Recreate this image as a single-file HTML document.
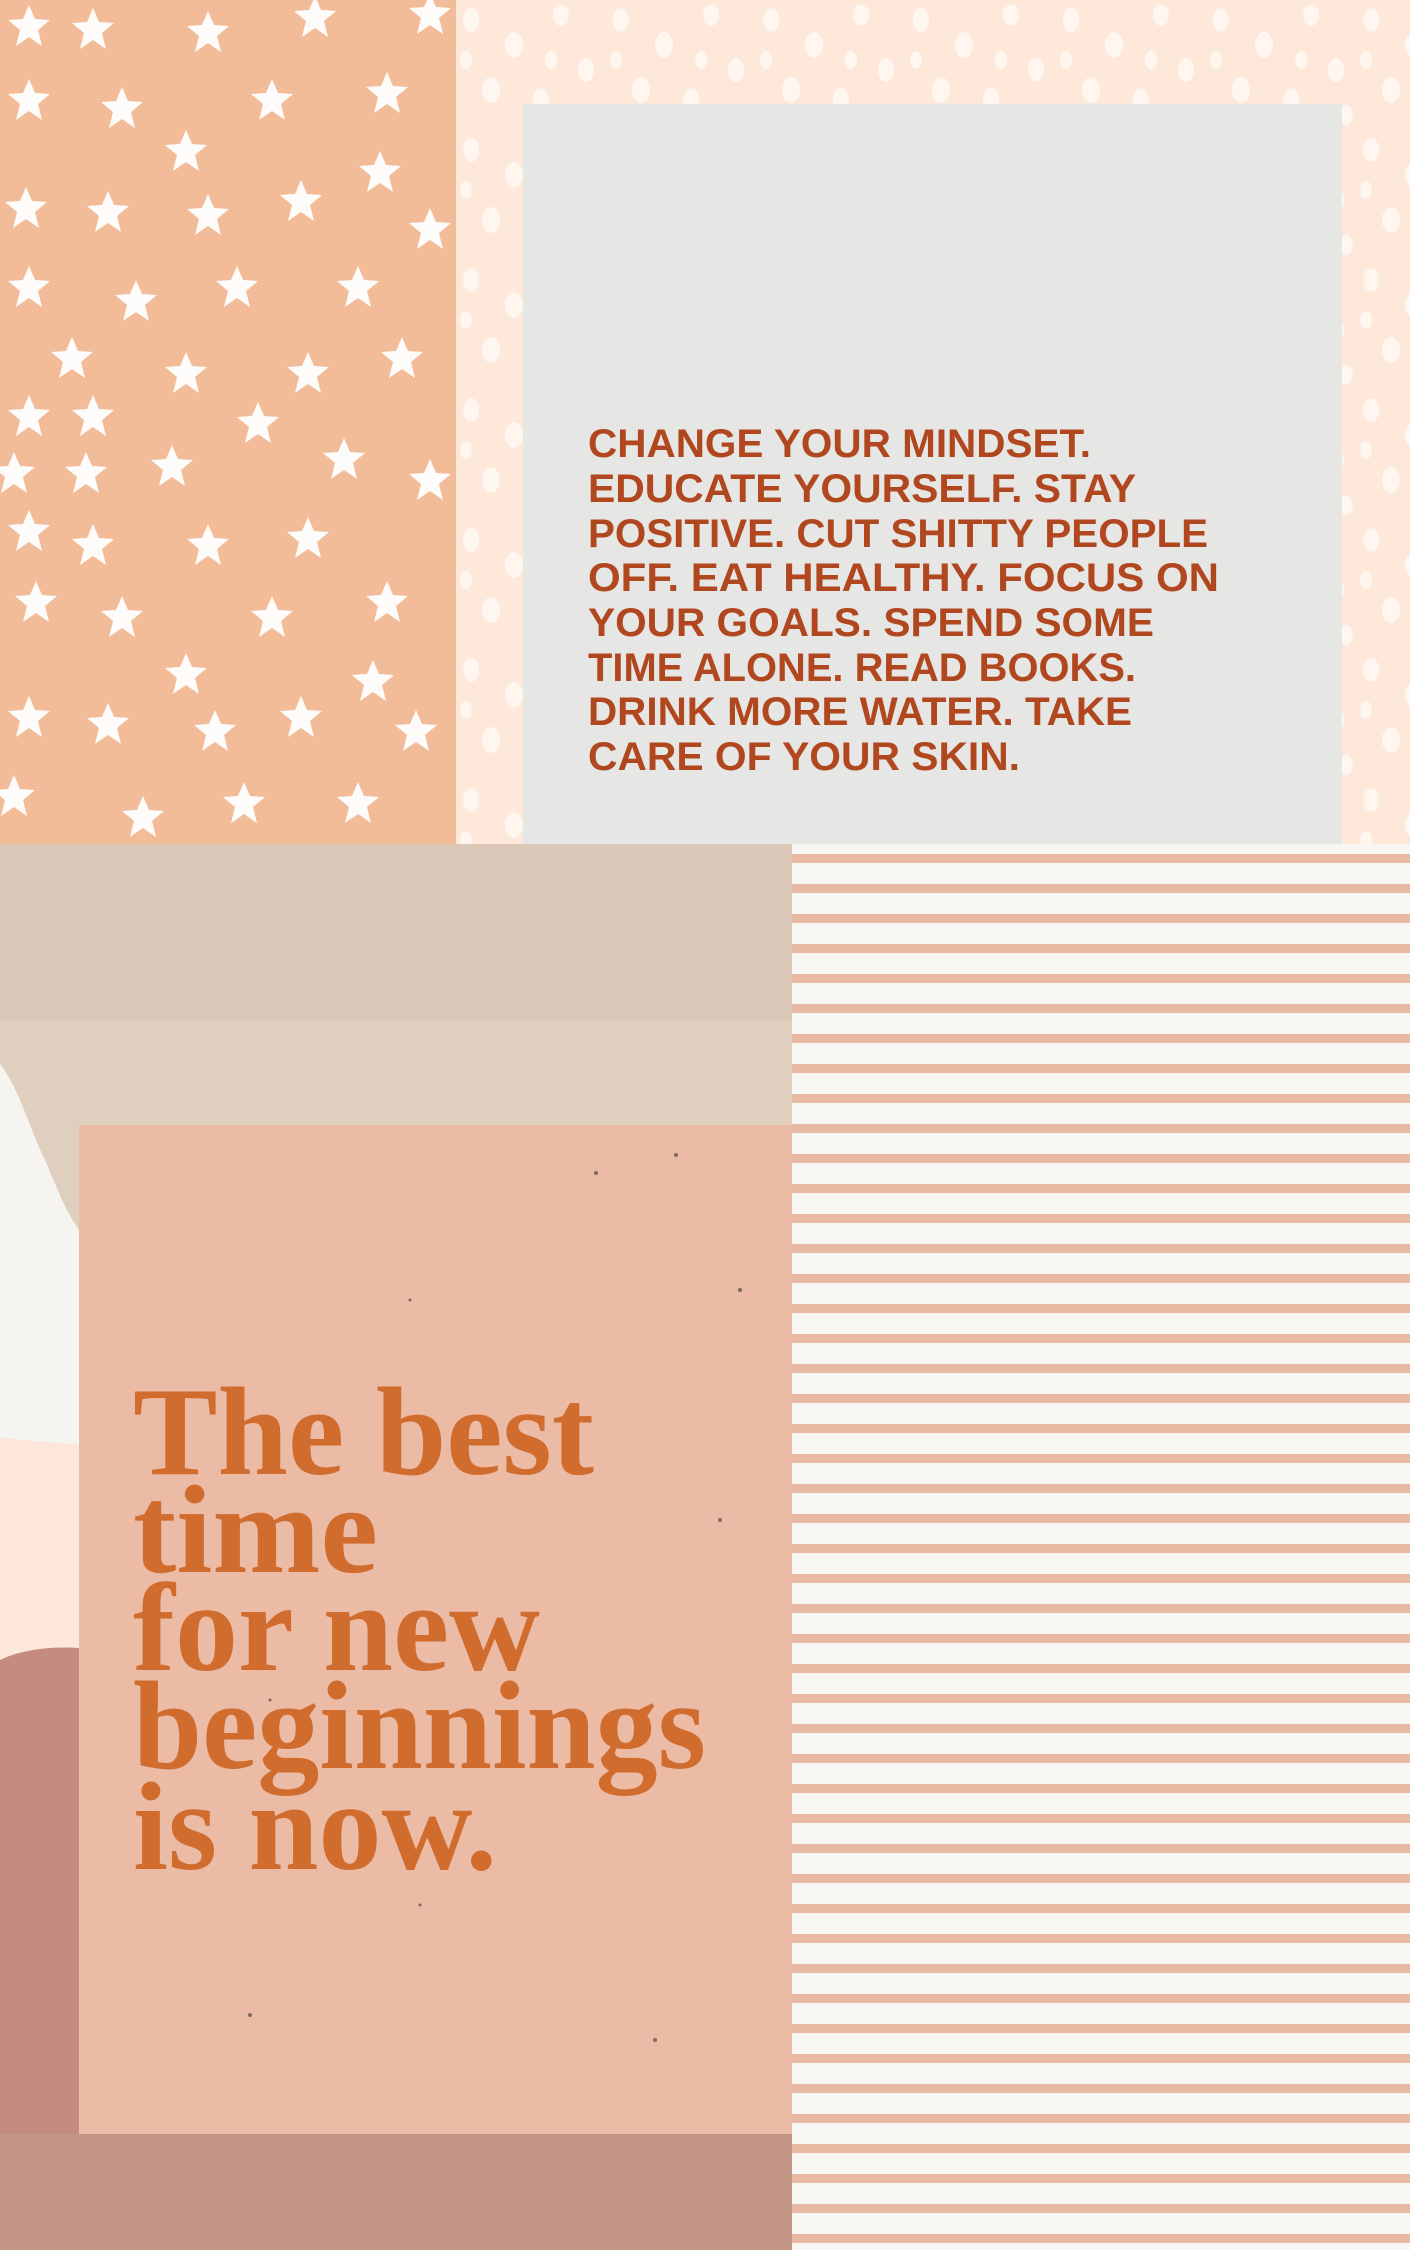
<!DOCTYPE html>
<html><head><meta charset="utf-8"><style>
html,body{margin:0;padding:0;}
body{width:1410px;height:2250px;position:relative;overflow:hidden;background:#fde9dc;}
svg{position:absolute;left:0;top:0;}
</style></head><body>
<svg width="1410" height="2250" viewBox="0 0 1410 2250" xmlns="http://www.w3.org/2000/svg">
<defs>
<pattern id="dots" x="456" y="0" width="150" height="130" patternUnits="userSpaceOnUse">
<rect width="150" height="130" fill="#fde8da"/>
<g fill="#fff6f0">
<ellipse cx="15" cy="20" rx="8" ry="12"/>
<ellipse cx="58" cy="45" rx="9" ry="13"/>
<ellipse cx="105" cy="15" rx="8" ry="11"/>
<ellipse cx="130" cy="70" rx="8" ry="12"/>
<ellipse cx="35" cy="90" rx="9" ry="13"/>
<ellipse cx="85" cy="100" rx="8" ry="12"/>
<ellipse cx="95" cy="60" rx="6" ry="9"/>
<ellipse cx="10" cy="60" rx="6" ry="9"/>
<ellipse cx="140" cy="115" rx="7" ry="10"/>
</g>
</pattern>
<pattern id="stripes" x="792" y="844" width="1410" height="30" patternUnits="userSpaceOnUse">
<rect width="1410" height="30" fill="#f7f6f2"/>
<rect y="10" width="1410" height="9" fill="#e8b9a3"/>
</pattern>
<polygon id="star" points="0,-21 6,-7 21,-6 9,4 13,20 0,11 -13,20 -9,4 -21,-6 -6,-7" fill="#fdfcfa"/>
</defs>

<rect x="456" y="0" width="954" height="844" fill="url(#dots)"/>
<rect x="0" y="0" width="456" height="844" fill="#f2bc99"/>
<g>
<use href="#star" x="29" y="26"/><use href="#star" x="93" y="29"/><use href="#star" x="208" y="32"/><use href="#star" x="315" y="17"/><use href="#star" x="430" y="14"/>
<use href="#star" x="29" y="100"/><use href="#star" x="122" y="108"/><use href="#star" x="272" y="100"/><use href="#star" x="387" y="93"/>
<use href="#star" x="186" y="151"/><use href="#star" x="380" y="172"/>
<use href="#star" x="26" y="208"/><use href="#star" x="108" y="212"/><use href="#star" x="208" y="215"/><use href="#star" x="301" y="201"/><use href="#star" x="430" y="229"/>
<use href="#star" x="29" y="287"/><use href="#star" x="136" y="301"/><use href="#star" x="237" y="287"/><use href="#star" x="358" y="287"/>
<use href="#star" x="72" y="358"/><use href="#star" x="186" y="373"/><use href="#star" x="308" y="373"/><use href="#star" x="402" y="358"/>
<use href="#star" x="29" y="416"/><use href="#star" x="93" y="416"/><use href="#star" x="258" y="423"/>
<use href="#star" x="14" y="473"/><use href="#star" x="86" y="473"/><use href="#star" x="172" y="466"/><use href="#star" x="344" y="459"/><use href="#star" x="430" y="480"/>
<use href="#star" x="29" y="531"/><use href="#star" x="93" y="545"/><use href="#star" x="208" y="545"/><use href="#star" x="308" y="538"/>
<use href="#star" x="36" y="602"/><use href="#star" x="122" y="617"/><use href="#star" x="272" y="617"/><use href="#star" x="387" y="602"/>
<use href="#star" x="186" y="674"/><use href="#star" x="373" y="681"/>
<use href="#star" x="29" y="717"/><use href="#star" x="108" y="724"/><use href="#star" x="215" y="731"/><use href="#star" x="301" y="717"/><use href="#star" x="416" y="731"/>
<use href="#star" x="14" y="796"/><use href="#star" x="143" y="817"/><use href="#star" x="244" y="803"/><use href="#star" x="358" y="803"/>
</g>

<rect x="523" y="104" width="819" height="740" fill="#e6e6e4"/>
<g font-family="Liberation Sans, sans-serif" font-weight="bold" font-size="40" fill="#b1471f">
<text x="588" y="457" textLength="503" lengthAdjust="spacingAndGlyphs">CHANGE YOUR MINDSET.</text>
<text x="588" y="502" textLength="548" lengthAdjust="spacingAndGlyphs">EDUCATE YOURSELF. STAY</text>
<text x="588" y="547" textLength="620" lengthAdjust="spacingAndGlyphs">POSITIVE. CUT SHITTY PEOPLE</text>
<text x="588" y="591" textLength="631" lengthAdjust="spacingAndGlyphs">OFF. EAT HEALTHY. FOCUS ON</text>
<text x="588" y="636" textLength="566" lengthAdjust="spacingAndGlyphs">YOUR GOALS. SPEND SOME</text>
<text x="588" y="681" textLength="548" lengthAdjust="spacingAndGlyphs">TIME ALONE. READ BOOKS.</text>
<text x="588" y="725" textLength="544" lengthAdjust="spacingAndGlyphs">DRINK MORE WATER. TAKE</text>
<text x="588" y="770" textLength="432" lengthAdjust="spacingAndGlyphs">CARE OF YOUR SKIN.</text>
</g>

<rect x="792" y="844" width="618" height="1406" fill="url(#stripes)"/>

<rect x="0" y="844" width="792" height="176" fill="#dcc8b9"/>
<rect x="0" y="1020" width="792" height="1114" fill="#e0cebf"/>
<path d="M0 1064 C20 1090 30 1130 45 1160 C58 1190 65 1210 79 1230 L79 1445 L0 1438 Z" fill="#f5f4f0"/>
<path d="M0 1438 L79 1445 L79 2134 L0 2134 Z" fill="#fde6da"/>
<path d="M0 1660 C20 1650 50 1646 79 1648 L79 2134 L0 2134 Z" fill="#c48c7e"/>
<rect x="0" y="2134" width="792" height="116" fill="#c29484"/>

<rect x="79" y="1125" width="713" height="1009" fill="#ecbba6"/>
<g fill="#7d6a64">
<circle cx="676" cy="1155" r="2"/><circle cx="596" cy="1173" r="2"/><circle cx="740" cy="1290" r="2"/>
<circle cx="410" cy="1300" r="1.5"/><circle cx="720" cy="1520" r="2"/><circle cx="250" cy="2015" r="2"/>
<circle cx="655" cy="2040" r="2"/><circle cx="270" cy="1700" r="1.5"/><circle cx="420" cy="1905" r="1.5"/>
</g>
<g font-family="Liberation Serif, serif" font-weight="bold" font-size="126" fill="#d06c2d">
<text x="133" y="1474" textLength="461" lengthAdjust="spacingAndGlyphs">The best</text>
<text x="133" y="1572" textLength="245" lengthAdjust="spacingAndGlyphs">time</text>
<text x="133" y="1670" textLength="407" lengthAdjust="spacingAndGlyphs">for new</text>
<text x="133" y="1768" textLength="573" lengthAdjust="spacingAndGlyphs">beginnings</text>
<text x="133" y="1869" textLength="364" lengthAdjust="spacingAndGlyphs">is now.</text>
</g>
</svg>
</body></html>
